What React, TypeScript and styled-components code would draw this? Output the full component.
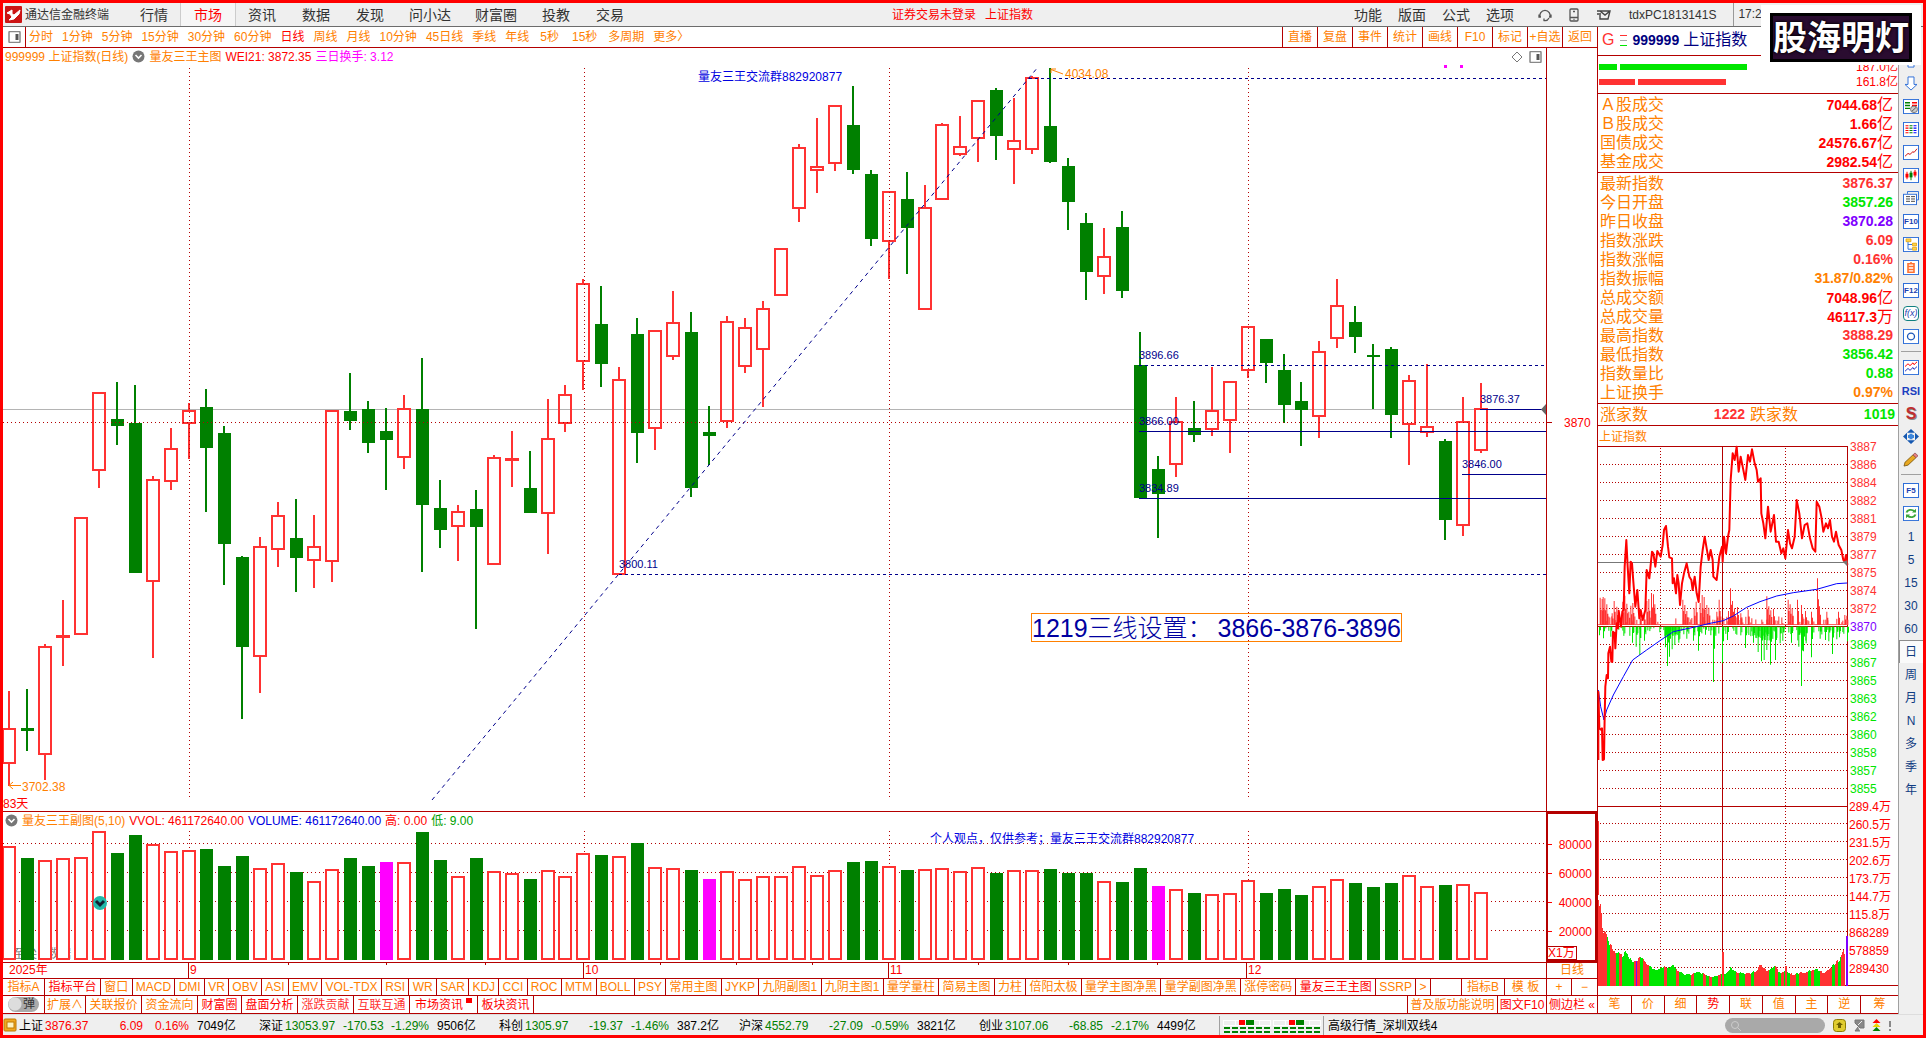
import React from "react";
import styled, { createGlobalStyle, css } from "styled-components";

const C = {
  frame: "#ff0000",
  line: "#b40000",
  orange: "#ff8000",
  red: "#ff0000",
  up: "#ff3232",
  down: "#008000",
  lime: "#00e600",
  navy: "#00008b",
  blue: "#0000e0",
  magenta: "#ff00ff",
  purple: "#8000ff",
  chrome: "#efefef",
};
const FONT = '"Liberation Sans", "Noto Sans CJK SC", sans-serif';

const Global = createGlobalStyle`
  * { box-sizing: border-box; }
  body { margin: 0; background: #fff; font: 12px/16px ${FONT}; }
  button, input { font: inherit; }
  button { border: 0; padding: 0; margin: 0; background: none; cursor: pointer; white-space: nowrap; }
  svg { display: block; }
`;

const Frame = styled.div`
  position: relative;
  min-height: 100vh;
  border: 3px solid ${C.frame};
  display: grid;
  grid-template-rows: 24px 1fr 21px;
`;

/* ---------- title bar ---------- */
const TitleBar = styled.header`
  display: flex;
  align-items: center;
  background: ${C.chrome};
  border-bottom: 1px solid #6c6c6c;
  color: #333;
  padding-left: 2px;
`;
const Brand = styled.div`
  display: flex;
  align-items: center;
  gap: 3px;
  width: 122px;
  color: #333;
`;
const Menu = styled.nav<{ $gap?: number }>`
  display: flex;
  align-self: stretch;
  gap: ${(p) => p.$gap || 0}px;
`;
const MenuButton = styled.button<{ $active?: boolean; $pad: number }>`
  padding: 0 ${(p) => p.$pad}px;
  font-size: 14px;
  line-height: 20px;
  color: #333;
  ${(p) =>
    p.$active &&
    css`
      color: ${C.red};
      background: #f6f6f6;
      box-shadow: -1px 0 #ccc, 1px 0 #ccc;
    `}
`;
const LoginState = styled.div`
  flex: 1;
  display: flex;
  justify-content: center;
  gap: 9px;
  color: ${C.red};
  padding-right: 66px;
`;
const Account = styled.div`
  display: flex;
  align-items: center;
  align-self: stretch;
  width: 385px;
  margin-left: 24px;
  gap: 17px;
`;
const Clock = styled.span`
  align-self: stretch;
  border-left: 1px solid #999;
  padding: 3px 0 0 4px;
`;

/* ---------- body ---------- */
const Body = styled.main`
  display: grid;
  grid-template-columns: minmax(0, 1fr) 301px 25px;
`;
const ChartColumn = styled.section`
  display: flex;
  flex-direction: column;
  min-width: 0;
`;
const PeriodBar = styled.div`
  display: flex;
  height: 21px;
  border-bottom: 1px solid ${C.line};
  align-items: stretch;
`;
const PanelToggle = styled.button`
  width: 23px;
  border-right: 1px solid ${C.line};
  display: grid;
  place-items: center;
`;
const Periods = styled.div`
  flex: 1;
  display: flex;
  gap: 9px;
  padding-left: 3px;
`;
const Period = styled.button<{ $active?: boolean; $wide?: boolean }>`
  color: ${(p) => (p.$active ? C.red : C.orange)};
  padding: 0 ${(p) => (p.$wide ? 2 : 0)}px;
`;
const Tool = styled.button`
  width: 35px;
  color: ${C.orange};
  border-left: 1px solid ${C.line};
`;
const ChartTitle = styled.div<{ $h: number }>`
  display: flex;
  align-items: center;
  height: ${(p) => p.$h}px;
  gap: 4px;
  padding-left: 2px;
  white-space: nowrap;
`;
const Ink = styled.span<{ $c: string }>`
  color: ${(p) => p.$c};
`;
const CornerIcons = styled.div`
  margin-left: auto;
  display: flex;
  gap: 6px;
  align-items: center;
`;
const AxisGap = styled.div`
  align-self: stretch;
  width: 51px;
  border-left: 1px solid ${C.line};
`;
const Plot = styled.svg`
  width: 100%;
  height: auto;
  font: 12px ${FONT};
`;
const VolumePanel = styled.div`
  display: grid;
  grid-template-columns: minmax(0, 1fr) 51px;
  border-top: 1px solid ${C.line};
  border-bottom: 1px solid ${C.line};
`;
const VolumeAxis = styled.div`
  border: 2px solid ${C.line};
  display: flex;
  flex-direction: column;
  padding-top: 16px;
  color: ${C.red};
`;
const AxisLabel = styled.div`
  height: 29px;
  display: flex;
  align-items: center;
  justify-content: space-between;
  padding-right: 3px;
  &::before {
    content: "";
    width: 4px;
    height: 1px;
    background: ${C.red};
  }
`;
const Unit = styled.div`
  width: 29px;
  height: 14px;
  line-height: 13px;
  border: 1px solid ${C.line};
  border-left: 0;
  white-space: nowrap;
`;
const DateRow = styled.div`
  display: grid;
  grid-template-columns: 185fr 395fr 305fr 358fr 300fr 51px;
  height: 16px;
  border-bottom: 1px solid ${C.line};
  color: ${C.red};
`;
const DateCell = styled.div<{ $first?: boolean }>`
  position: relative;
  line-height: 15px;
  padding-left: ${(p) => (p.$first ? 6 : 1)}px;
  border-left: ${(p) => (p.$first ? 0 : 1)}px solid ${C.line};
`;
const WeekTick = styled.i`
  position: absolute;
  top: 0;
  width: 1px;
  height: 2px;
  background: ${C.line};
`;
const PeriodName = styled.div`
  border-left: 1px solid ${C.line};
  text-align: center;
  line-height: 15px;
  color: ${C.orange};
`;
const TabRow = styled.div<{ $h: number }>`
  display: flex;
  height: ${(p) => p.$h}px;
  border-bottom: 1px solid ${C.line};
`;
const TabStrip = styled.div`
  flex: 1;
  display: flex;
  min-width: 0;
`;
const Tab = styled.button<{ $c?: string; $w?: number; $left?: boolean }>`
  flex: ${(p) => (p.$w ? `0 0 ${p.$w}px` : "1 1 auto")};
  padding: 0 ${(p) => (p.$w ? 0 : 2)}px;
  color: ${(p) => p.$c || C.orange};
  border-right: ${(p) => (p.$left ? 0 : 1)}px solid ${C.line};
  border-left: ${(p) => (p.$left ? 1 : 0)}px solid ${C.line};
  line-height: 16px;
`;
const Filler = styled.div<{ $w?: number }>`
  flex: ${(p) => (p.$w ? `0 0 ${p.$w}px` : "1")};
`;
const Switch = styled.label`
  width: 42px;
  display: grid;
  place-items: center;
  border-right: 1px solid ${C.line};
  input {
    position: absolute;
    opacity: 0;
  }
  span {
    width: 31px;
    height: 15px;
    border-radius: 8px;
    background: #aaa radial-gradient(circle at 7px 7px, #ddd 6px, transparent 7px);
    color: #333;
    line-height: 15px;
    text-align: right;
    padding-right: 4px;
  }
`;
const Dot = styled.i`
  display: inline-block;
  width: 6px;
  height: 5px;
  margin-left: 3px;
  vertical-align: 6px;
  background: ${C.red};
`;

/* ---------- quote column ---------- */
const QuoteColumn = styled.aside`
  border-left: 1px solid ${C.line};
  display: flex;
  flex-direction: column;
`;
const QuoteHead = styled.div`
  height: 29px;
  border-bottom: 1px solid ${C.line};
  display: flex;
  align-items: center;
  gap: 4px;
  padding: 0 0 2px 4px;
  font-size: 16px;
  line-height: 22px;
  color: #000080;
  b { font-size: 14px; }
`;
const Marks = styled.span`
  display: grid;
  gap: 4px;
  width: 7px;
  margin: 0 1px 0 2px;
  i { height: 1px; background: ${C.up}; }
  i:nth-child(2) { background: #aaa; }
  i:nth-child(3) { background: ${C.lime}; }
`;
const Flow = styled.div`
  height: 38px;
  border-bottom: 1px solid ${C.line};
  padding: 3px 0 0 1px;
`;
const FlowRow = styled.div<{ $c: string }>`
  height: 15px;
  display: flex;
  align-items: center;
  gap: 3px;
  color: ${C.red};
  i { height: 6px; background: ${(p) => p.$c}; }
  span { margin-left: auto; }
`;
const Bar = styled.i<{ $w: number }>`
  width: ${(p) => p.$w}px;
`;
const Facts = styled.dl`
  margin: 0;
  padding: 1px 5px 1px 2px;
  border-bottom: 1px solid ${C.line};
`;
const Fact = styled.div`
  display: flex;
  justify-content: space-between;
  height: 19px;
  font-size: 16px;
  line-height: 19px;
  dt { color: ${C.orange}; }
`;
const Value = styled.dd<{ $c: string }>`
  margin: 0;
  color: ${(p) => p.$c};
  font-weight: 700;
  font-size: 14px;
  span { font-weight: 400; font-size: 16px; }
`;
const Breadth = styled.dl`
  margin: 0;
  height: 22px;
  padding: 0 3px 0 2px;
  display: grid;
  grid-template-columns: 50px 95px 5px 50px 1fr;
  font-size: 16px;
  line-height: 21px;
  border-bottom: 1px solid ${C.line};
  dt { color: ${C.orange}; }
  dt:nth-of-type(2) { grid-column: 4; }
  dd { text-align: right; }
`;
const QuoteTabs = styled.div`
  margin-top: auto;
  display: grid;
  grid-template-columns: repeat(8, 33fr) 38fr;
  height: 19px;
  border-top: 1px solid ${C.line};
  border-bottom: 1px solid ${C.line};
`;
const QuoteTab = styled.button<{ $active?: boolean }>`
  color: ${(p) => (p.$active ? C.red : C.orange)};
  line-height: 17px;
  & + & { border-left: 1px solid ${C.line}; }
`;

/* ---------- icon rail ---------- */
const Rail = styled.nav`
  background: ${C.chrome};
  border-left: 1px solid #a0a0a0;
  padding-top: 22px;
  display: flex;
  flex-direction: column;
`;
const RailButton = styled.button<{ $active?: boolean; $bold?: boolean }>`
  height: 23px;
  width: 100%;
  display: grid;
  place-items: center;
  color: ${(p) => (p.$bold ? "#1c3fc0" : "#103c82")};
  font-weight: ${(p) => (p.$bold ? 700 : 400)};
  font-size: ${(p) => (p.$bold ? 11 : 12)}px;
  ${(p) => p.$active && "background:#fafafa; box-shadow: inset 1px 1px #8c8c8c;"}
`;
const RailRule = styled.hr`
  width: 20px;
  height: 8px;
  margin: 0 2px;
  border: 0;
  background: linear-gradient(#a0a0a0, #a0a0a0) 0 3px / 100% 1px no-repeat;
`;

/* ---------- status bar ---------- */
const StatusBar = styled.footer`
  display: flex;
  align-items: center;
  background: ${C.chrome};
  border-top: 1px solid #ddd;
  padding-top: 1px;
`;
const IndexQuote = styled.div`
  display: grid;
  grid-template-columns: 26px 58px 40px 46px 1fr;
  width: 240px;
  white-space: nowrap;
  color: #000;
`;
const Num = styled.span<{ $c: string; $right?: boolean }>`
  color: ${(p) => p.$c};
  text-align: ${(p) => (p.$right ? "right" : "left")};
`;
const Amount = styled.span`
  padding-left: 8px;
`;
const Cell = styled.div<{ $pad?: number }>`
  border-left: 1px solid #a0a0a0;
  height: 19px;
  display: flex;
  align-items: center;
  padding-left: ${(p) => p.$pad || 0}px;
`;
const Search = styled.label`
  margin-left: auto;
  display: flex;
  align-items: center;
  width: 100px;
  height: 15px;
  border-radius: 8px;
  background: #a9a9a9;
  padding-left: 5px;
  input {
    width: 76px;
    height: 13px;
    border: 0;
    background: transparent;
    outline: 0;
  }
`;
const Tray = styled.div`
  display: flex;
  align-items: center;
  gap: 7px;
  padding: 0 31px 0 8px;
`;

const Badge = styled.div`
  position: absolute;
  top: 2px;
  right: 2px;
  width: 160px;
  height: 60px;
  background: #fff;
  padding: 8px 9px;
`;
const BadgeText = styled.div`
  height: 49px;
  width: 142px;
  background: #2a0c30;
  box-shadow: inset 0 0 0 3px #000;
  color: #fff;
  font: 700 34px/46px "Noto Sans CJK SC", sans-serif;
  text-shadow: 0 0 3px #000, 0 0 3px #000;
  text-align: center;
  white-space: nowrap;
`;

/* ---------- market data ---------- */
const STEP = 17.951;
const cx = (i: number) => Math.round(9 + STEP * i);
// kind, high, body top, body bottom, low
type Candle = [string, number, number, number, number];
const candles: Candle[] = [
  ["r",691,728,764,786],["g",689,728,731,751],["r",644,646,755,780],["r",600,635,638,666],["r",517,517,635,635],
  ["r",392,392,471,488],["g",382,419,426,445],["g",385,423,573,573],["r",476,479,582,658],["r",428,448,482,490],
  ["r",403,410,424,459],["g",389,407,448,512],["g",426,433,544,585],["g",556,557,647,719],["r",537,546,657,693],
  ["r",502,515,550,567],["g",499,538,558,592],["r",515,546,561,588],["r",410,410,562,582],["g",373,411,421,430],
  ["g",401,409,443,453],["g",408,431,440,490],["r",395,408,458,469],["g",358,409,505,572],["g",480,508,530,548],
  ["r",505,511,527,561],["g",490,509,527,629],["r",455,457,565,565],["r",431,458,461,487],["g",451,488,513,513],
  ["r",399,438,514,554],["r",385,394,424,432],["r",279,283,362,390],["g",286,324,364,387],["r",367,379,575,575],
  ["g",318,334,433,463],["r",330,330,429,450],["r",291,322,357,360],["g",312,332,488,497],["g",406,432,436,465],
  ["r",316,321,422,428],["r",318,327,367,373],["r",301,308,350,407],["r",248,248,296,296],["r",144,147,209,222],
  ["r",118,166,171,193],["r",105,105,164,171],["g",86,125,170,174],["g",170,174,239,246],["r",191,191,242,279],
  ["g",172,199,228,274],["r",185,207,310,310],["r",123,124,200,200],["r",116,146,155,156],["r",100,100,139,162],
  ["g",88,90,136,160],["r",98,140,150,184],["r",76,77,150,154],["g",68,126,162,163],["g",158,166,202,230],
  ["g",213,223,272,300],["r",228,256,277,294],["g",211,227,291,298],["g",332,365,498,498],["g",456,469,494,538],
  ["r",397,421,465,477],["g",401,428,435,442],["r",367,410,430,436],["r",381,381,421,453],["r",326,326,371,378],
  ["g",339,339,363,383],["g",354,370,405,423],["g",382,401,410,446],["r",341,351,417,438],["r",279,305,339,348],
  ["g",306,322,337,353],["g",344,355,357,409],["g",347,349,415,438],["r",375,380,425,465],["r",364,426,433,437],
  ["g",439,441,520,540],["r",397,421,526,536],["r",383,408,451,453],
];
const volumeTops = [
  846,858,860,858,857,831,853,835,844,851,850,849,866,856,868,863,872,881,869,858,866,862,862,832,860,876,858,871,873,
  879,870,876,853,855,856,843,867,868,870,879,871,879,876,876,866,875,870,862,861,866,870,869,868,871,867,873,870,870,
  869,873,873,881,882,868,886,889,893,894,893,880,893,889,895,886,879,883,887,883,875,886,885,884,892,
];
const climax = new Set([21, 39, 64]);

const months = [189, 584, 889, 1248];

const levels: [string, number, number, boolean][] = [
  ["3896.66", 1139, 365, true],
  ["3866.00", 1139, 431, false],
  ["3876.37", 1480, 409, false],
  ["3846.00", 1462, 474, false],
  ["3834.89", 1139, 498, false],
  ["3800.11", 619, 574, true],
];

const CandleChart = () => (
  <Plot viewBox="3 65 1594 746" role="img" aria-label="上证指数 日线">
    <g shapeRendering="crispEdges">
      <rect x="3" y="409" width="1543" height="1" fill="#b4b4b4" />
      {candles.map(([k, h, t, b, l], i) => {
        const x = cx(i);
        return k === "g" ? (
          <g key={i} fill={C.down}>
            <rect x={x - 1} y={h} width="2" height={l - h} />
            <rect x={x - 6} y={t} width="13" height={b - t} />
          </g>
        ) : (
          <g key={i} fill={C.up}>
            <rect x={x - 1} y={h} width="2" height={t - h} />
            <rect x={x - 1} y={b} width="2" height={l - b} />
            <rect x={x - 6} y={t + 1} width="12" height={Math.max(1, b - t - 2)} fill="none" stroke={C.up} strokeWidth="2" />
          </g>
        );
      })}
      <g stroke={C.line} strokeDasharray="1 3">
        <path d="M3 422.5H1546" />
        {months.map((x) => (
          <path key={x} d={`M${x + 0.5} 68V798`} />
        ))}
      </g>
      <path d="M1546.5 65V811M1546 422.5H1552" stroke={C.line} fill="none" />
      <g stroke={C.navy}>
        {levels.map(([n, x, y, dash]) => (
          <path key={n} d={`M${x} ${y + 0.5}H1546`} strokeDasharray={dash ? "3 3" : undefined} />
        ))}
        <path d="M1029 78.5H1546" strokeDasharray="3 3" />
      </g>
      <path d="M1444 65h3v3h-3zM1460 65h3v3h-3z" fill={C.magenta} />
      <rect x="1031.5" y="613.5" width="370" height="28" fill="none" stroke={C.orange} />
    </g>
    <path d="M1546 404V415L1541 409.500Z" fill="#666" />
    <path d="M432 800L1038 67" stroke={C.navy} strokeDasharray="4 4" />
    <path d="M1063 74L1051 69.500M1051 73V69H1056" stroke={C.orange} fill="none" />
    <path d="M21 785.500H9M13 782L9 785.500L13 789" stroke={C.orange} fill="none" />
    <g fontSize="11" fill={C.navy}>
      {levels.map(([n, x, y]) => (
        <text key={n} x={x} y={y - 6}>{n}</text>
      ))}
    </g>
    <g fill={C.orange}>
      <text x="1065" y="78">4034.08</text>
      <text x="22" y="791">3702.38</text>
    </g>
    <text x="698" y="81" fill={C.blue}>量友三王交流群882920877</text>
    <text x="3" y="808" fill={C.red}>83天</text>
    <text x="1564" y="427" fill={C.red}>3870</text>
    <text x="1032" y="637" fontSize="25" fontWeight="200" fill="#0000a0">1219三线设置：</text>
    <text x="1401" y="637" fontSize="25" fill="#0000a0" textAnchor="end">3866-3876-3896</text>
  </Plot>
);

const VolumeChart = () => (
  <Plot viewBox="3 829 1543 133" role="img" aria-label="成交量">
    <text x="13" y="958" fill="#777">至尖 &nbsp; 数据</text>
    <g shapeRendering="crispEdges">
      <g stroke={C.line} strokeDasharray="1 3">
        {[843, 872, 901, 930].map((y) => (
          <path key={y} d={`M3 ${y + 0.5}H1546`} />
        ))}
        {months.map((x) => (
          <path key={x} d={`M${x + 0.5} 831V960`} />
        ))}
      </g>
      {volumeTops.map((y, i) => {
        const x = cx(i);
        if (candles[i][0] === "g" || climax.has(i))
          return <rect key={i} x={x - 6} y={y} width="13" height={960 - y} fill={climax.has(i) ? C.magenta : C.down} />;
        return <rect key={i} x={x - 6} y={y + 1} width="12" height={958 - y} fill="#fff" stroke={C.up} strokeWidth="2" />;
      })}
    </g>
    <circle cx="100" cy="903" r="7" fill="#20b8a8" />
    <path d="M96 901l4 4 4-4" stroke="#123" strokeWidth="3" fill="none" />
    <text x="930" y="843" fill={C.blue}>个人观点，仅供参考；量友三王交流群882920877</text>
  </Plot>
);

/* intraday series are kept on a grid of three units per pixel */
const pricePath =
  "25,1020 25,815 28,925 34,930 36,925 38,1020 42,1018 44,890 46,800 50,765 54,775 55,700 60,680 64,725 67,725 69,635 74,640 76,685 80,610 84,625 86,572 90,600 93,620 97,575 101,570 104,440 109,360 113,440 118,520 122,425 126,430 130,485 136,560 142,510 148,595 152,570 158,600 166,570 170,450 178,475 186,395 190,400 196,440 202,393 212,410 218,375 222,330 228,318 234,380 238,412 246,415 248,490 252,475 258,520 262,465 266,490 270,555 276,490 282,460 290,430 298,470 304,480 308,510 314,470 320,520 326,546 332,440 338,390 344,350 350,385 356,420 362,390 368,420 370,470 380,480 388,410 396,380 398,425 402,350 408,400 414,350 418,330 422,180 428,100 434,120 440,80 446,155 452,110 458,140 466,180 474,105 480,125 486,88 494,130 500,150 504,185 512,175 514,280 520,310 526,355 534,260 542,335 552,285 558,365 566,365 574,400 580,385 586,415 594,330 600,370 606,385 614,350 620,240 628,280 636,355 644,315 652,310 660,355 668,385 676,395 680,245 688,260 694,290 700,335 708,310 714,325 720,300 726,350 732,365 738,335 746,375 754,390 760,420 764,425 768,405 772,435";
const avgPath =
  "25,810 32,860 42,900 50,870 70,825 100,770 128,720 170,690 210,662 250,635 310,622 360,610 400,602 430,588 470,562 510,545 560,528 610,518 680,508 740,491 772,489";
const upSpikes: [number, number][] = [
  [30,82],[36,78],[39,84],[44,80],[50,62],[66,35],[72,72],[80,55],[98,70],[104,88],[110,64],[116,40],[122,58],[128,66],[150,34],
  [162,30],[170,72],[176,78],[184,96],[190,92],[194,62],[278,76],[284,60],[290,42],[312,50],[318,70],[330,66],[336,90],[342,84],
  [350,60],[356,52],[380,40],[387,76],[415,42],[421,110],[427,72],[433,50],[442,54],[452,35],[474,46],[530,86],[536,56],[542,44],
  [550,48],[594,76],[600,62],[606,50],[622,76],[634,60],[646,42],[664,40],[682,140],[688,56],[710,40],[745,40],[764,30],[770,28],
];
const downSpikes: [number, number][] = [
  [28,26],[40,35],[62,30],[127,48],[138,60],[149,85],[163,42],[226,62],[232,118],[238,90],[246,68],[254,55],[266,48],[290,36],
  [310,42],[325,72],[346,24],[370,166],[397,110],[412,40],[466,64],[490,48],[504,76],[514,104],[522,100],[530,70],[541,114],
  [556,100],[570,50],[578,42],[604,48],[626,60],[634,178],[640,74],[648,50],[664,92],[690,36],[706,40],[716,44],[727,82],
  [740,38],[748,32],[772,44],
];
const envelope: [number, number][] = [
  [25,280],[30,230],[34,195],[40,165],[50,155],[56,125],[65,118],[75,100],[90,90],[105,95],[115,85],[125,70],[140,75],[150,85],
  [170,68],[185,55],[205,45],[220,60],[240,52],[250,60],[260,44],[280,35],[300,32],[320,45],[340,35],[360,26],[380,30],[395,40],
  [404,38],[420,55],[440,40],[480,38],[495,44],[512,65],[530,45],[555,60],[565,38],[585,42],[600,34],[640,40],[680,48],[700,40],
  [720,52],[745,75],[760,100],[765,104],
];
const depth = (x: number) => {
  const k = envelope.findIndex((p) => p[0] >= x);
  if (k <= 0) return envelope[0][1];
  const [a, b] = [envelope[k - 1], envelope[k]];
  return a[1] + ((b[1] - a[1]) * (x - a[0])) / (b[0] - a[0]);
};
const noise = (n: number) => {
  const v = Math.sin(n * 12.9898) * 43758.5453;
  return v - Math.floor(v);
};
const ticks = Array.from({ length: 247 }, (_, i) => i);
const prices = "3887 3886 3884 3882 3881 3879 3877 3875 3874 3872 3870 3869 3867 3865 3863 3862 3860 3858 3857 3855".split(" ");
const turnovers = ["289.4万","260.5万","231.5万","202.6万","173.7万","144.7万","115.8万","868289","578859","289430"];
const priceColor = (i: number) => (i < 10 ? C.up : i === 10 ? C.purple : C.lime);

const Intraday = () => (
  <Plot viewBox="1598 426 300 569" role="img" aria-label="上证指数 分时">
    <text x="1599" y="441" fill={C.orange}>上证指数</text>
    <g shapeRendering="crispEdges" stroke={C.line} fill="none">
      <g strokeDasharray="1 2">
        {prices.slice(1).map((_, i) => (
          <path key={i} d={`M1600 ${464.5 + i * 18}H1847`} />
        ))}
        {turnovers.slice(1).map((_, i) => (
          <path key={i} d={`M1600 ${823.5 + i * 18}H1847`} />
        ))}
        <path d="M1660.5 448V985M1785.5 448V985" />
      </g>
      <path d="M1598 446.5H1847.500V985.500M1722.500 446V985M1598 806.500H1847M1598 626.500H1847M1598 985.500H1898" />
      <path d="M1598 562.500H1847" stroke="#777" />
    </g>
    <g transform="translate(1590 420) scale(0.33333)">
      {ticks.map((i) => {
        const x = 25 + i * 3;
        const up = noise(i + 3) > 0.7 ? 6 + noise(i) * 20 : 3;
        const busy = (x > 222 && x < 270) || (x > 480 && x < 560) || (x > 620 && x < 650);
        const dn = busy ? 12 + noise(i + 9) * 30 : noise(i + 70) > 0.6 ? noise(i + 5) * 28 : 0;
        return (
          <g key={i}>
            <rect x={x} y={615 - up} width="3" height={up} fill={C.up} />
            <rect x={x} y="620" width="3" height={dn} fill={C.lime} />
          </g>
        );
      })}
      {upSpikes.map(([x, h]) => (
        <path key={x} d={`M${x - 1} ${615 - h}h3V615h-3zM${x + 2} ${615 - h * 0.55}h3V615h-3z`} fill={C.up} />
      ))}
      {downSpikes.map(([x, h]) => (
        <path key={x} d={`M${x - 1} 620h3v${h}h-3zM${x + 2} 620h3v${h * 0.4}h-3z`} fill={C.lime} />
      ))}
    </g>
    <g transform="translate(1590 780) scale(0.33333)" shapeRendering="crispEdges">
      {ticks.map((i) => {
        const x = 24 + i * 3;
        const h = depth(x) * (0.92 + noise(Math.floor(i / 2)) * 0.16);
        return <rect key={i} x={x} y={617 - h} width="4" height={h} fill={noise(Math.floor(i / 3) + 40) > 0.45 ? C.up : C.lime} />;
      })}
      <rect x="24" y="123" width="3" height="222" fill={C.up} />
      <rect x="397" y="516" width="5" height="101" fill={C.up} />
      <rect x="586" y="558" width="5" height="59" fill={C.up} />
      <rect x="137" y="543" width="4" height="74" fill={C.purple} />
      <rect x="768" y="468" width="6" height="149" fill={C.purple} />
    </g>
    <g transform="translate(1590 420) scale(0.33333)" fill="none">
      <polyline points={avgPath} stroke="#0000ff" strokeWidth="3" />
      <polyline points={pricePath} stroke="#ff0000" strokeWidth="6" strokeLinejoin="round" />
      <path d="M758 425l14-4v18z" fill="#777" />
    </g>
    {prices.map((p, i) => (
      <text key={p} x="1850" y={451 + i * 18} fill={priceColor(i)}>{p}</text>
    ))}
    {turnovers.map((p, i) => (
      <text key={p} x="1849" y={811 + i * 18} fill={C.red}>{p}</text>
    ))}
  </Plot>
);

/* ---------- small drawings ---------- */
const PaneIcon = () => (
  <svg width="13" height="12" viewBox="0 0 13 12" fill="none" stroke="#888">
    <rect x="1" y="0.500" width="11" height="11" rx="1" strokeWidth="1.500" />
    <path d="M9 3v6" stroke="#555" strokeWidth="3" />
  </svg>
);
const Chevron = () => (
  <svg width="13" height="13" viewBox="0 0 13 13">
    <circle cx="6.500" cy="6.500" r="6" fill="#777" />
    <path d="M3.500 5l3 3 3-3" stroke="#fff" strokeWidth="1.600" fill="none" />
  </svg>
);

const railArt: Record<string, React.ReactNode> = {
  上翻: <path d="M5 15V8H2l6-6 6 6h-3v7z" fill="#fff" stroke="#2f6fd8" />,
  下翻: <path d="M5 1v8H2l6 6 6-6h-3V1z" fill="#fff" stroke="#2f6fd8" />,
  自选报价: (
    <>
      <path d="M2 4h5M2 7h5M2 10h5" stroke={C.down} strokeWidth="1.500" />
      <path d="M9 4h5M9 7h5" stroke="red" strokeWidth="1.500" />
      <circle cx="11" cy="11" r="3.500" fill="#ccc" stroke="#777" />
      <path d="M9 13l4-4" stroke="#555" />
    </>
  ),
  行情列表: (
    <g strokeWidth="1.200">
      <path d="M2.500 4h3M2.500 6.500h3M2.500 9h3M2.500 11.500h3" stroke="red" />
      <path d="M6.500 4h3M6.500 6.500h3M6.500 9h3M6.500 11.500h3" stroke={C.down} />
      <path d="M10.500 4h3M10.500 6.500h3M10.500 9h3M10.500 11.500h3" stroke="blue" />
    </g>
  ),
  分时走势: <path d="M2 12l3-3 2 1 3-3 1 1 3-4" stroke="#d01010" fill="none" />,
  K线图: (
    <>
      <path d="M4 4v8M12 2v8" stroke="red" />
      <path d="M8 3v10" stroke={C.down} />
      <path d="M2.500 6h3v4h-3zM10.500 4h3v4h-3z" fill="red" />
      <path d="M6.500 5h3v5h-3z" fill={C.down} />
    </>
  ),
  多股同列: (
    <>
      <path d="M4.500 3V.500h11v9H13" fill="none" stroke="#2f6fd8" />
      <path d="M3 6h4M3 8.500h4M3 11h4M8 6h4M8 8.500h4M8 11h4" stroke="#444" />
    </>
  ),
  分类: (
    <>
      <path d="M5 5v8h4M5 8h4" stroke="#2f6fd8" fill="none" />
      <path d="M3 2h5v3H3zM9.500 6.500h4v3h-4zM9.500 11h4v3h-4z" fill="#ffd24a" stroke="#d89a00" strokeWidth=".7" />
    </>
  ),
  自: <path d="M5 4h6v9H5zM5 7h6M5 10h6M8 2v2" fill="none" stroke="#ff7030" strokeWidth="1.600" />,
  圈: <circle cx="8" cy="8" r="3.500" fill="none" stroke="#1c55b8" strokeWidth="1.300" />,
  叠加: (
    <>
      <path d="M2 7l3-3 2 2 3-3 1 2 3-3" stroke="red" fill="none" />
      <path d="M2 12l3-3 2 2 3-3 1 2 3-3" stroke="#2030c0" fill="none" />
    </>
  ),
  移动: (
    <>
      <path d="M8 0l4 4H4zM8 16l4-4H4zM0 8l4-4v8zM16 8l-4-4v8z" fill="#1457b0" />
      <path d="M6.500 5h3v1.500H11v3H9.500V11h-3V9.500H5v-3h1.500z" fill="#3c86dc" />
    </>
  ),
  画笔: (
    <>
      <path d="M1 15l1-4 8-8 3 3-8 8z" fill="#e8a820" stroke="#705010" strokeWidth=".8" />
      <path d="M10 3l2-2 3 3-2 2z" fill="#e88080" stroke="#905050" strokeWidth=".8" />
    </>
  ),
  刷新: (
    <>
      <path d="M3.500 7c1-3 5-4 8-1.500M12.500 9c-1 3-5 4-8 1.500" stroke="#3aa63a" strokeWidth="2" fill="none" />
      <path d="M13 3v4H9zM3 13V9h4z" fill="#3aa63a" />
    </>
  ),
};
const bare = new Set(["上翻", "下翻", "移动", "画笔"]);
const RailIcon = ({ name }: { name: string }) => (
  <svg width="16" height="15" viewBox="0 0 16 16" preserveAspectRatio="none">
    {!bare.has(name) && <rect x=".5" y={name === "多股同列" ? 3.5 : 0.5} width={name === "多股同列" ? 13 : 15} height={name === "多股同列" ? 11 : 15} fill="#fff" stroke="#2f6fd8" />}
    {railArt[name]}
  </svg>
);
const Key = styled.span<{ $round?: boolean }>`
  display: block;
  width: 16px;
  height: 15px;
  border: 1px solid ${(p) => (p.$round ? "#108080" : "#2f6fd8")};
  border-radius: ${(p) => (p.$round ? 4 : 0)}px;
  background: #fff;
  color: #1c3fb0;
  font-size: ${(p) => (p.$round ? 9 : 8)}px;
  font-weight: ${(p) => (p.$round ? 400 : 700)};
  font-style: ${(p) => (p.$round ? "italic" : "normal")};
  line-height: 13px;
  text-align: center;
`;
const Dollar = styled.span`
  color: #c03030;
  font-size: 16px;
  font-weight: 700;
  text-shadow: 1px 1px #888;
`;

const rail: string[] = [
  "上翻","下翻","自选报价","行情列表","分时走势","K线图","多股同列","key:F10","分类","自","key:F12","fx:f(x)","圈","-",
  "叠加","bold:RSI","dollar:S","移动","画笔","-","key:F5","刷新","1","5","15","30","60","日","周","月","N","多","季","年",
];
const renderRail = (r: string, i: number) => {
  if (r === "-") return <RailRule key={i} />;
  const [kind, label] = r.split(":");
  if (label)
    return (
      <RailButton key={i} $bold={kind === "bold"}>
        {kind === "bold" ? label : kind === "dollar" ? <Dollar>{label}</Dollar> : <Key $round={kind === "fx"}>{label}</Key>}
      </RailButton>
    );
  if (railArt[r]) return <RailButton key={i} aria-label={r}><RailIcon name={r} /></RailButton>;
  return <RailButton key={i} $active={r === "日"}>{r}</RailButton>;
};

const facts1: [string, string, string][] = [
  ["Ａ股成交", "7044.68亿", C.red],
  ["Ｂ股成交", "1.66亿", C.red],
  ["国债成交", "24576.67亿", C.red],
  ["基金成交", "2982.54亿", C.red],
];
const facts2: [string, string, string][] = [
  ["最新指数", "3876.37", C.up],
  ["今日开盘", "3857.26", C.lime],
  ["昨日收盘", "3870.28", C.purple],
  ["指数涨跌", "6.09", C.up],
  ["指数涨幅", "0.16%", C.up],
  ["指数振幅", "31.87/0.82%", C.orange],
  ["总成交额", "7048.96亿", C.red],
  ["总成交量", "46117.3万", C.red],
  ["最高指数", "3888.29", C.up],
  ["最低指数", "3856.42", C.lime],
  ["指数量比", "0.88", C.lime],
  ["上证换手", "0.97%", C.orange],
];
const FactList = ({ rows }: { rows: [string, string, string][] }) => (
  <Facts>
    {rows.map(([k, v, c]) => (
      <Fact key={k}>
        <dt>{k}</dt>
        <Value $c={c}>
          {v.replace(/[亿万]/, "")}
          {/[亿万]/.test(v) && <span>{v.slice(-1)}</span>}
        </Value>
      </Fact>
    ))}
  </Facts>
);

const periods = "分时 1分钟 5分钟 15分钟 30分钟 60分钟 日线 周线 月线 10分钟 45日线 季线 年线 5秒 15秒 多周期 更多〉".split(" ");
const tools = "直播 复盘 事件 统计 画线 F10 标记 +自选 返回".split(" ");
const tabs =
  "窗口 MACD DMI VR OBV ASI EMV VOL-TDX RSI WR SAR KDJ CCI ROC MTM BOLL PSY 常用主图 JYKP 九阴副图1 九阴主图1 量学量柱 简易主图 力柱 倍阳太极 量学主图净黑 量学副图净黑 涨停密码 量友三王主图 SSRP".split(" ");
const infoTabs: [string, number, string][] = [
  ["扩展∧", 41, C.orange],
  ["关联报价", 56, C.orange],
  ["资金流向", 56, C.orange],
  ["财富圈", 44, C.red],
  ["盘面分析", 56, C.red],
  ["涨跌贡献", 56, C.up],
  ["互联互通", 56, C.up],
];
const indices = [
  ["上证", "3876.37", "6.09", "0.16%", "7049亿"],
  ["深证", "13053.97", "-170.53", "-1.29%", "9506亿"],
  ["科创", "1305.97", "-19.37", "-1.46%", "387.2亿"],
  ["沪深", "4552.79", "-27.09", "-0.59%", "3821亿"],
  ["创业", "3107.06", "-68.85", "-2.17%", "4499亿"],
];
const dates: [string, number[]][] = [
  ["2025年", []],
  ["9", [25, 50, 75]],
  ["10", [25, 50, 75]],
  ["11", [25, 50, 75]],
  ["12", []],
];

const MiniDepth = () => (
  <svg width="103" height="18" viewBox="0 0 103 18" shapeRendering="crispEdges">
    {[3, 53].map((x) => (
      <g key={x}>
        <path d={`M${x} 3h47v5h-47zM${x + 12} 3v5M${x + 36} 3v5`} stroke="#fff" fill="none" />
        <rect x={x + 16} y="3" width="6" height="5" fill="red" />
        <rect x={x + 23} y="3" width="8" height="5" fill={C.down} />
        <path d={`M${x + 1} 11h46M${x + 1} 15h46`} stroke={C.down} strokeWidth="2" strokeDasharray="6 2" />
      </g>
    ))}
  </svg>
);

export default function App() {
  return (
    <Frame>
      <Global />
      <TitleBar>
        <Brand>
          <svg width="17" height="17" viewBox="0 0 17 17">
            <rect width="17" height="17" rx="1" fill="#cc1414" />
            <path d="M2 7l5-3v4l2 1 6-5-1 4-5 5-5 1 3-3-2-3z" fill="#fff" stroke="#fff" strokeLinejoin="round" />
          </svg>
          通达信金融终端
        </Brand>
        <Menu>
          {"行情 市场 资讯 数据 发现 问小达 财富圈 投教 交易".split(" ").map((m) => (
            <MenuButton key={m} $active={m === "市场"} $pad={m.length > 2 ? 12 : 13}>{m}</MenuButton>
          ))}
        </Menu>
        <LoginState><span>证券交易未登录</span><span>上证指数</span></LoginState>
        <Menu $gap={16}>
          {["功能", "版面", "公式", "选项"].map((m) => (
            <MenuButton key={m} $pad={0}>{m}</MenuButton>
          ))}
        </Menu>
        <Account>
          <svg width="14" height="14" viewBox="0 0 14 14" fill="none" stroke="#555" strokeWidth="1.300">
            <path d="M2.500 9.500A5 5 0 1 1 11.500 9.500M1 6.500v2.500h2M13 6.500v2.500h-2M11 10c-1 2-3 3-5 2.500L6 10.500" />
          </svg>
          <svg width="10" height="14" viewBox="0 0 10 14" fill="none" stroke="#555" strokeWidth="1.300">
            <rect x="1" y="1" width="8" height="12" rx="1" />
            <path d="M1 9.500h8M4 3.500h2M4.500 11.300h1" />
          </svg>
          <svg width="16" height="13" viewBox="0 0 16 13" fill="none" stroke="#444" strokeWidth="1.400">
            <path d="M4 7V11H12l2-8H4l5 4 5-4M1 3h4M1 6h4" />
          </svg>
          <span>tdxPC1813141S</span>
          <Clock>17:2</Clock>
        </Account>
      </TitleBar>

      <Body>
        <ChartColumn>
          <PeriodBar>
            <PanelToggle aria-label="侧栏"><PaneIcon /></PanelToggle>
            <Periods>
              {periods.map((p) => (
                <Period key={p} $active={p === "日线"} $wide={p.endsWith("秒")}>{p}</Period>
              ))}
            </Periods>
            {tools.map((t) => (
              <Tool key={t}>{t}</Tool>
            ))}
          </PeriodBar>
          <ChartTitle $h={17}>
            <Ink $c={C.orange}>999999 上证指数(日线)</Ink>
            <Chevron />
            <Ink $c={C.orange}>量友三王主图</Ink>
            <Ink $c={C.red}>WEI21: 3872.35</Ink>
            <Ink $c={C.magenta}>三日换手: 3.12</Ink>
            <CornerIcons>
              <svg width="12" height="12" viewBox="0 0 12 12"><path d="M6 1l5 5-5 5-5-5z" fill="none" stroke="#777" /></svg>
              <PaneIcon />
            </CornerIcons>
            <AxisGap />
          </ChartTitle>
          <CandleChart />
          <VolumePanel>
            <div>
              <ChartTitle $h={17}>
                <Chevron />
                <Ink $c={C.orange}>量友三王副图(5,10)</Ink>
                <Ink $c={C.red}>VVOL: 461172640.00</Ink>
                <Ink $c={C.blue}>VOLUME: 461172640.00</Ink>
                <Ink $c={C.red}>高: 0.00</Ink>
                <Ink $c="#00a000">低: 9.00</Ink>
              </ChartTitle>
              <VolumeChart />
            </div>
            <VolumeAxis>
              {[80000, 60000, 40000, 20000].map((v) => (
                <AxisLabel key={v}>{v}</AxisLabel>
              ))}
              <Unit>X1万</Unit>
            </VolumeAxis>
          </VolumePanel>
          <DateRow>
            {dates.map(([d, t], i) => (
              <DateCell key={d} $first={i === 0}>
                {d}
                {t.map((left) => (
                  <WeekTick key={left} style={{ left: `${left}%` }} />
                ))}
              </DateCell>
            ))}
            <PeriodName>日线</PeriodName>
          </DateRow>
          <TabRow $h={17}>
            <Tab $w={42}>指标A</Tab>
            <Tab $w={56} $c={C.red}>指标平台</Tab>
            <TabStrip>
              {tabs.map((t) => (
                <Tab key={t} $c={t === "量友三王主图" ? C.red : undefined}>{t}</Tab>
              ))}
            </TabStrip>
            <Tab $w={15}>&gt;</Tab>
            <Filler $w={30} />
            <Tab $w={43} $left>指标B</Tab>
            <Tab $w={42} $left>模 板</Tab>
            <Tab $w={25} $left>+</Tab>
            <Tab $w={26} $left>−</Tab>
          </TabRow>
          <TabRow $h={18}>
            <Switch><input type="checkbox" aria-label="弹" /><span>弹</span></Switch>
            {infoTabs.map(([t, w, c]) => (
              <Tab key={t} $w={w} $c={c}>{t}</Tab>
            ))}
            <Tab $w={68} $c={C.red}>市场资讯<Dot /></Tab>
            <Tab $w={56} $c={C.red}>板块资讯</Tab>
            <Filler />
            <Tab $w={90} $left>普及版功能说明</Tab>
            <Tab $w={49} $left $c={C.red}>图文F10</Tab>
            <Tab $w={51} $left $c={C.red}>侧边栏 «</Tab>
          </TabRow>
        </ChartColumn>

        <QuoteColumn>
          <QuoteHead>
            <Ink $c={C.up}>G</Ink>
            <Marks><i /><i /><i /></Marks>
            <b>999999</b>上证指数
          </QuoteHead>
          <Flow>
            <FlowRow $c={C.lime}><Bar $w={18} /><Bar $w={127} /><span>187.0亿</span></FlowRow>
            <FlowRow $c={C.up}><Bar $w={36} /><Bar $w={88} /><span>161.8亿</span></FlowRow>
          </Flow>
          <FactList rows={facts1} />
          <FactList rows={facts2} />
          <Breadth>
            <dt>涨家数</dt><Value $c={C.up}>1222</Value>
            <dt>跌家数</dt><Value $c={C.lime}>1019</Value>
          </Breadth>
          <Intraday />
          <QuoteTabs>
            {"笔价细势联值主逆筹".split("").map((t) => (
              <QuoteTab key={t} $active={t === "势"}>{t}</QuoteTab>
            ))}
          </QuoteTabs>
        </QuoteColumn>

        <Rail>{rail.map(renderRail)}</Rail>
      </Body>

      <StatusBar>
        <svg width="16" height="15" viewBox="0 0 16 15">
          <rect x="1" y="1" width="12" height="12" rx="1" fill="#f0a820" stroke="#c07800" />
          <rect x="4" y="4" width="7" height="6" fill="#fff3c0" stroke="#c07800" />
        </svg>
        {indices.map(([n, v, d, p, a]) => {
          const c = d.startsWith("-") ? C.down : C.red;
          return (
            <IndexQuote key={n}>
              <span>{n}</span>
              <Num $c={c}>{v}</Num>
              <Num $c={c} $right>{d}</Num>
              <Num $c={c} $right>{p}</Num>
              <Amount>{a}</Amount>
            </IndexQuote>
          );
        })}
        <Cell><MiniDepth /></Cell>
        <Cell $pad={4}>高级行情_深圳双线4</Cell>
        <Search>
          <svg width="12" height="12" viewBox="0 0 12 12" fill="none" stroke="#ccc">
            <circle cx="5" cy="5" r="3.500" /><path d="M7.500 7.500L11 11" />
          </svg>
          <input aria-label="搜索" />
        </Search>
        <Tray>
          <svg width="13" height="13" viewBox="0 0 13 13">
            <rect x=".5" y=".5" width="12" height="12" rx="3" fill="#e0cc30" stroke="#8c7c00" />
            <path d="M6.500 3L10 6H8v3H5V6H3z" fill="#6c6000" />
          </svg>
          <svg width="12" height="13" viewBox="0 0 12 13" fill="none" stroke="#777">
            <path d="M2 1h9v8H7L2 4zM5 8l-3 4h5" fill="#888" />
            <path d="M5 6l4-4" stroke="#eee" />
          </svg>
          <svg width="9" height="13" viewBox="0 0 9 13">
            <path d="M4.500 0L8.500 4h-8z" fill="red" /><path d="M4.500 4L8.500 8h-8z" fill="#e8d800" /><path d="M4.500 8L8.500 12h-8z" fill={C.down} />
          </svg>
          <svg width="4" height="12" viewBox="0 0 4 12"><path d="M1 1h2v6H1zM1 9h2v2H1z" fill="#888" /></svg>
        </Tray>
      </StatusBar>
      <Badge><BadgeText>股海明灯</BadgeText></Badge>
    </Frame>
  );
}
